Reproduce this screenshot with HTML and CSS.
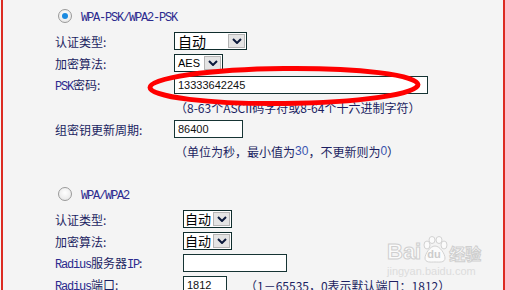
FILE: index.html
```html
<!DOCTYPE html>
<html lang="zh-CN">
<head>
    <meta charset="UTF-8">
    <title>无线安全设置</title>
    <link rel="stylesheet" href="styles.css">
</head>
<body>
    <div class="frame">
        <div class="section">
            <div class="radio-row">
                <span class="radio checked"></span>
                <span class="mode">WPA-PSK/WPA2-PSK</span>
            </div>
            <div class="row">
                <span class="label">认证类型:</span>
                <span class="select w73"><span class="val">自动</span><span class="arrow"><svg width="10" height="6" viewBox="0 0 10 6"><path d="M1 1 L5 5 L9 1" fill="none" stroke="#0c1a3c" stroke-width="2"/></svg></span></span>
            </div>
            <div class="row">
                <span class="label">加密算法:</span>
                <span class="select w49"><span class="val en-val">AES</span><span class="arrow"><svg width="10" height="6" viewBox="0 0 10 6"><path d="M1 1 L5 5 L9 1" fill="none" stroke="#0c1a3c" stroke-width="2"/></svg></span></span>
            </div>
            <div class="row">
                <span class="label"><span class="en">PSK</span>密码:</span>
                <span class="input w254">13333642245</span>
            </div>
            <div class="row hint">（8-63个ASCII码字符或8-64个十六进制字符）</div>
            <div class="row">
                <span class="label">组密钥更新周期:</span>
                <span class="input w69">86400</span>
            </div>
            <div class="row hint">（单位为秒，最小值为<span class="num">30</span>，不更新则为<span class="num">0</span>）</div>
        </div>

        <div class="section lower">
            <div class="radio-row">
                <span class="radio"></span>
                <span class="mode">WPA/WPA2</span>
            </div>
            <div class="row">
                <span class="label wide">认证类型:</span>
                <span class="select w49 small"><span class="val">自动</span><span class="arrow"><svg width="10" height="6" viewBox="0 0 10 6"><path d="M1 1 L5 5 L9 1" fill="none" stroke="#0c1a3c" stroke-width="2"/></svg></span></span>
            </div>
            <div class="row">
                <span class="label wide">加密算法:</span>
                <span class="select w49 small"><span class="val">自动</span><span class="arrow"><svg width="10" height="6" viewBox="0 0 10 6"><path d="M1 1 L5 5 L9 1" fill="none" stroke="#0c1a3c" stroke-width="2"/></svg></span></span>
            </div>
            <div class="row">
                <span class="label wide"><span class="en">Radius</span>服务器<span class="en">IP</span>:</span>
                <span class="input w104"></span>
            </div>
            <div class="row">
                <span class="label wide"><span class="en">Radius</span>端口:</span>
                <span class="input w44">1812</span>
                <span class="port-hint">（1－65535，0表示默认端口：1812）</span>
            </div>
        </div>

        <svg class="mark" width="505" height="290" viewBox="0 0 505 290">
            <ellipse cx="284" cy="86" rx="134" ry="17.5" fill="none" stroke="#ff0000" stroke-width="5" transform="rotate(-0.6 284 86)"/>
        </svg>

        <div class="watermark">
            <div class="wm-logo">
                <span class="wm-bai">Bai</span>
                <span class="wm-paw">
                    <svg width="28" height="28" viewBox="0 0 28 28">
                        <g fill="#fbfbfb" stroke="#d2d2d2" stroke-width="1">
                            <ellipse cx="6" cy="9" rx="3" ry="4"/>
                            <ellipse cx="11" cy="4" rx="3" ry="3.5"/>
                            <ellipse cx="18" cy="4" rx="3" ry="3.5"/>
                            <ellipse cx="23" cy="9" rx="3" ry="4"/>
                            <path d="M14 10 C9 10 4 18 4 22 C4 27 10 26 14 26 C18 26 24 27 24 22 C24 18 19 10 14 10 Z"/>
                        </g>
                    </svg>
                    <span class="wm-du">du</span>
                </span>
                <span class="wm-cn">经验</span>
            </div>
            <div class="wm-url">jingyan.baidu.com</div>
        </div>
    </div>
</body>
</html>
```

FILE: styles.css
```css
body {
    margin: 0;
    background: #f4f4f4;
    font-family: "Noto Sans CJK SC", sans-serif;
    font-size: 12px;
    color: #1c1f62;
}
.frame {
    position: relative;
    width: 500px;
    height: 290px;
    margin-left: 1px;
    border-left: 2px solid #dc2b22;
    border-right: 2px solid #dc2b22;
    overflow: hidden;
}
.section {
    padding: 6px 0 0 52px;
}
.section.lower {
    padding-top: 22px;
}
.radio-row {
    display: flex;
    align-items: center;
    height: 20px;
    margin-bottom: 4px;
}
.radio {
    width: 12px;
    height: 12px;
    margin-left: 3px;
    border: 1px solid #9a9a9a;
    border-radius: 50%;
    background: radial-gradient(circle at 50% 40%, #ffffff, #e2e2e2);
    position: relative;
}
.radio.checked::after {
    content: "";
    position: absolute;
    left: 3px;
    top: 3px;
    width: 6px;
    height: 6px;
    border-radius: 50%;
    background: #1a8ae0;
}
.mode {
    margin-left: 9px;
    padding-top: 3px;
    font-family: "Liberation Mono", monospace;
    font-size: 12px;
    letter-spacing: -1.2px;
    color: #2b2a8e;
}
.row {
    display: flex;
    align-items: center;
    height: 22px;
}
.label {
    width: 119px;
    flex: none;
    white-space: nowrap;
}
.label.wide {
    width: 128px;
}
.en {
    font-family: "Liberation Mono", monospace;
    font-size: 12px;
    letter-spacing: -1.2px;
    color: #2b2a8e;
}
.select {
    display: flex;
    align-items: center;
    box-sizing: border-box;
    height: 18px;
    border: 1px solid #0f2d2d;
    background: #fff;
    color: #000;
}
.select .val {
    flex: 1;
    padding-left: 3px;
    font-size: 14px;
    line-height: 16px;
}
.select.small .val {
    padding-left: 1px;
    font-size: 13px;
}
.select .en-val {
    font-family: "Liberation Sans", sans-serif;
    font-size: 11px;
}
.arrow {
    display: flex;
    align-items: center;
    justify-content: center;
    box-sizing: border-box;
    width: 17px;
    height: 14px;
    margin-right: 1px;
    background: #e4e4e4;
    border: 1px solid #b4b4b4;
}
.input {
    box-sizing: border-box;
    height: 18px;
    padding-left: 3px;
    border: 1px solid #163434;
    background: #fff;
    color: #111;
    font-family: "Liberation Sans", sans-serif;
    font-size: 11px;
    line-height: 16px;
}
.w44 { width: 44px; }
.w49 { width: 49px; }
.w69 { width: 69px; }
.w73 { width: 73px; }
.w104 { width: 104px; }
.w254 { width: 254px; }
.hint {
    padding-left: 120px;
    white-space: nowrap;
}
.num {
    font-family: "Liberation Sans", sans-serif;
    color: #3a55b0;
}
.port-hint {
    margin-left: 18px;
    white-space: nowrap;
}
.mark {
    position: absolute;
    left: -3px;
    top: 0;
    pointer-events: none;
}
.watermark {
    position: absolute;
    left: 384px;
    top: 236px;
    width: 96px;
    color: #d6d6d6;
}
.wm-logo {
    display: flex;
    align-items: flex-end;
    height: 28px;
}
.wm-bai {
    font-family: "Liberation Sans", sans-serif;
    font-weight: bold;
    font-size: 22px;
    line-height: 24px;
    color: #fbfbfb;
    -webkit-text-stroke: 1px #cfcfcf;
}
.wm-paw {
    position: relative;
    width: 28px;
    height: 28px;
}
.wm-du {
    position: absolute;
    left: 6px;
    top: 12px;
    font-family: "Liberation Sans", sans-serif;
    font-weight: bold;
    font-size: 11px;
    color: #cccccc;
}
.wm-cn {
    font-weight: bold;
    font-size: 16px;
    line-height: 22px;
    color: #fbfbfb;
    -webkit-text-stroke: 1px #cfcfcf;
}
.wm-url {
    font-family: "Liberation Sans", sans-serif;
    font-size: 11px;
    line-height: 12px;
    margin-top: 1px;
    color: #dcdcdc;
}
```
